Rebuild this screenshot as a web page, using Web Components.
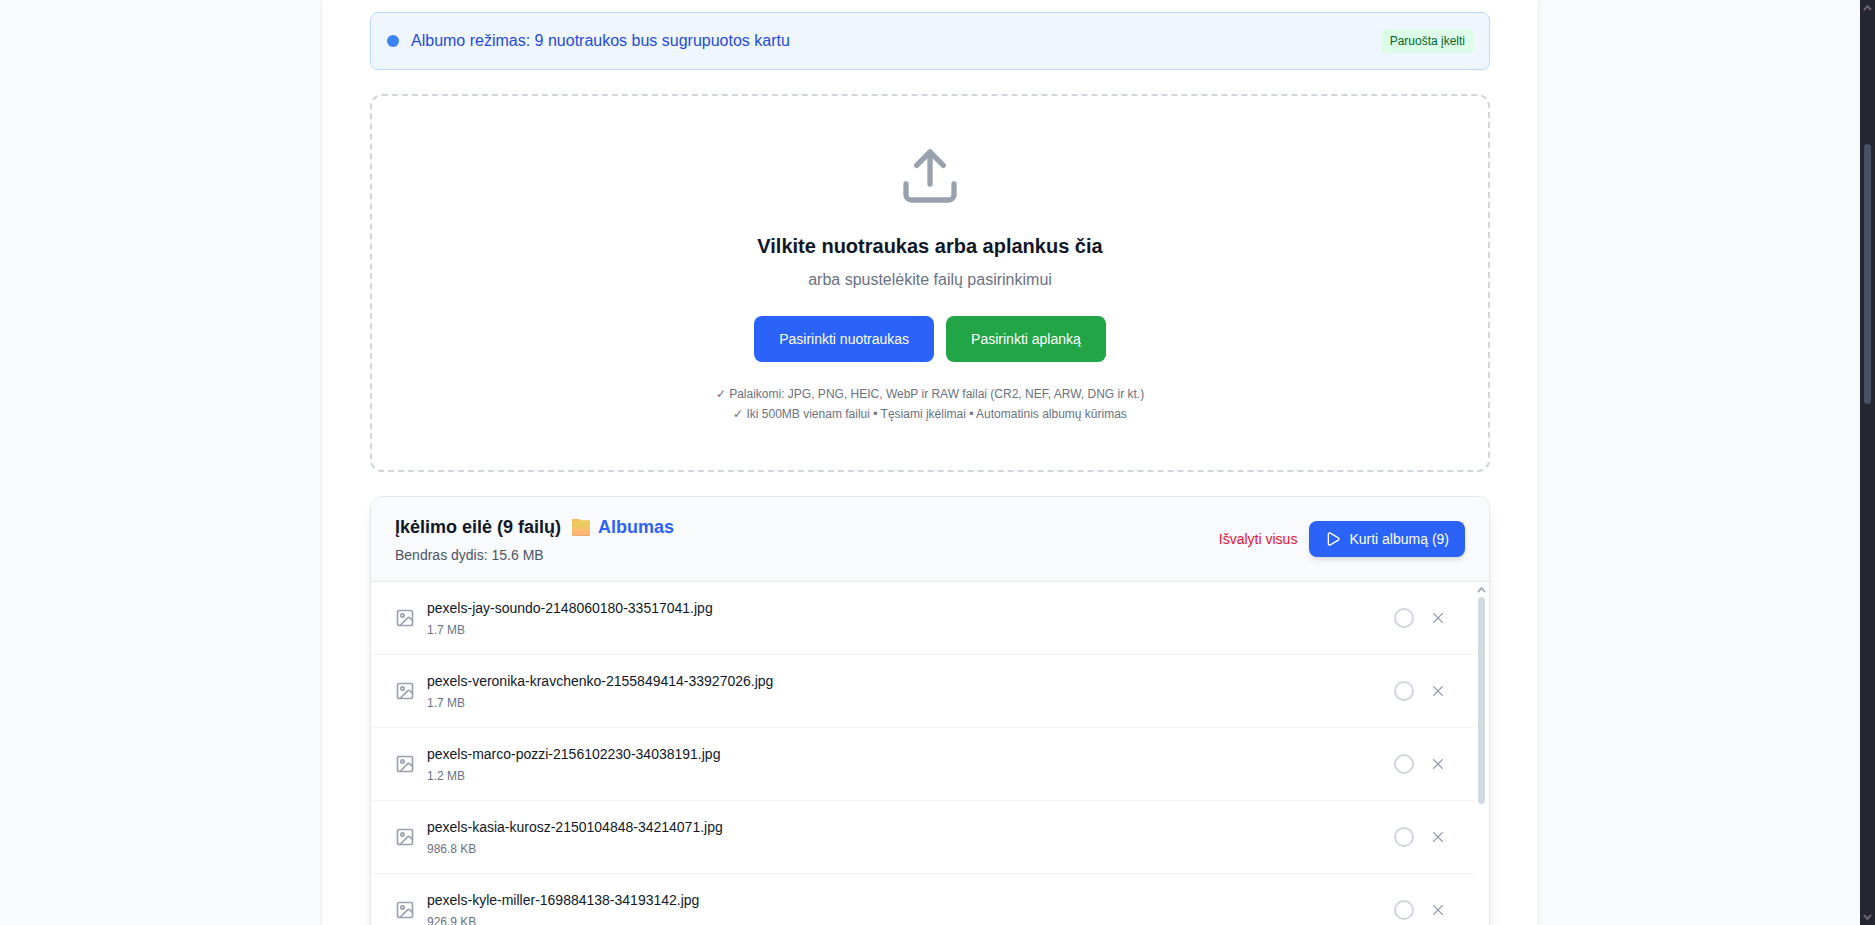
<!DOCTYPE html>
<html lang="lt">
<head>
  <meta charset="utf-8">
  <meta name="viewport" content="width=device-width, initial-scale=1">
  <title>Nuotraukų įkėlimas</title>
  <style>
    body {
      margin: 0;
      font-family: "Liberation Sans", Arial, sans-serif;
      font-size: 16px;
      line-height: 24px;
      color: #101828;
      background: #f9fafb;
    }
  </style>
</head>
<body>
  <upload-page>
    <album-banner status="Paruošta įkelti">Albumo režimas: 9 nuotraukos bus sugrupuotos kartu</album-banner>
    <drop-zone>
      <span slot="title">Vilkite nuotraukas arba aplankus čia</span>
      <span slot="hint">arba spustelėkite failų pasirinkimui</span>
      <app-button slot="action">Pasirinkti nuotraukas</app-button>
      <app-button slot="action" variant="green">Pasirinkti aplanką</app-button>
      <span slot="note">✓ Palaikomi: JPG, PNG, HEIC, WebP ir RAW failai (CR2, NEF, ARW, DNG ir kt.)</span>
      <span slot="note">✓ Iki 500MB vienam failui • Tęsiami įkėlimai • Automatinis albumų kūrimas</span>
    </drop-zone>
    <upload-queue total="15.6 MB">
      <queue-item name="pexels-jay-soundo-2148060180-33517041.jpg" size="1.7 MB"></queue-item>
      <queue-item name="pexels-veronika-kravchenko-2155849414-33927026.jpg" size="1.7 MB"></queue-item>
      <queue-item name="pexels-marco-pozzi-2156102230-34038191.jpg" size="1.2 MB"></queue-item>
      <queue-item name="pexels-kasia-kurosz-2150104848-34214071.jpg" size="986.8 KB"></queue-item>
      <queue-item name="pexels-kyle-miller-169884138-34193142.jpg" size="926.9 KB"></queue-item>
    </upload-queue>
  </upload-page>

  <script>
    const ICONS = {
      upload: '<path d="M12 3v12"/><path d="m17 8-5-5-5 5"/><path d="M21 15v4a2 2 0 0 1-2 2H5a2 2 0 0 1-2-2v-4"/>',
      play: '<path d="M5 5a2 2 0 0 1 3.008-1.728l11.997 6.998a2 2 0 0 1 .003 3.458l-12 7A2 2 0 0 1 5 19z"/>',
      image: '<rect width="18" height="18" x="3" y="3" rx="2" ry="2"/><circle cx="9" cy="9" r="2"/><path d="m21 15-3.086-3.086a2 2 0 0 0-2.828 0L6 21"/>',
      close: '<g stroke-width="1.8"><path d="M18.500 5.500 5.500 18.500"/><path d="m5.500 5.500 13 13"/></g>',
    };

    class LineIcon extends HTMLElement {
      constructor() {
        super();
        this.attachShadow({ mode: 'open' }).innerHTML = `
          <style>
            :host { display: block; flex: none; width: 20px; height: 20px; }
            svg { display: block; width: 100%; height: 100%; }
          </style>
          <svg viewBox="0 0 24 24" fill="none" stroke="currentColor" stroke-width="2"
            stroke-linecap="round" stroke-linejoin="round" aria-hidden="true">
            ${ICONS[this.getAttribute('name')]}
          </svg>
        `;
      }
    }

    class ScrollRail extends HTMLElement {
      constructor() {
        super();
        const arrow = '<path d="m4 10 3.5-4 3.5 4"/>';
        this.attachShadow({ mode: 'open' }).innerHTML = `
          <style>
            :host {
              display: flex;
              flex-direction: column;
              align-items: center;
              flex: none;
              width: 15px;
              background: var(--rail-track, transparent);
              color: var(--rail-arrow, #a9b5bd);
            }
            svg { display: block; flex: none; width: 15px; height: 15px; }
            .down { transform: rotate(180deg); }
            .track {
              flex: 1;
              display: flex;
              flex-direction: column;
              width: 7px;
            }
            .before { flex: var(--rail-before, 0) 0 0px; }
            .thumb {
              flex: var(--rail-size, 1) 0 0px;
              border-radius: 4px;
              background: var(--rail-thumb, #d1d9e1);
            }
            .after { flex: var(--rail-after, 0) 0 0px; }
          </style>
          <svg viewBox="0 0 15 15" fill="none" stroke="currentColor" stroke-width="2" aria-hidden="true">${arrow}</svg>
          <div class="track">
            <div class="before"></div>
            <div class="thumb"></div>
            <div class="after"></div>
          </div>
          <svg class="down" viewBox="0 0 15 15" fill="none" stroke="currentColor" stroke-width="2" aria-hidden="true">${arrow}</svg>
        `;
      }
    }

    class AppButton extends HTMLElement {
      constructor() {
        super();
        this.attachShadow({ mode: 'open' }).innerHTML = `
          <style>
            :host { display: block; }
            button {
              display: flex;
              align-items: center;
              gap: 8px;
              padding: 12px 24px;
              border: 1px solid transparent;
              border-radius: 8px;
              background: #2b63f8;
              color: white;
              font: inherit;
              font-size: 14px;
              line-height: 20px;
              cursor: pointer;
            }
            button:hover { filter: brightness(0.92); }
            :host([variant="green"]) button { background: #22a547; }
            :host([variant="text"]) button {
              padding: 0;
              border: none;
              background: none;
              color: #ea1038;
            }
            :host([size="small"]) button {
              padding: 8px 16px;
              border: none;
              box-shadow: 0 4px 6px -1px rgba(0, 0, 0, 0.1), 0 2px 4px -2px rgba(0, 0, 0, 0.1);
            }
          </style>
          <button type="button"><slot></slot></button>
        `;
      }
    }

    class AlbumBanner extends HTMLElement {
      constructor() {
        super();
        this.attachShadow({ mode: 'open' }).innerHTML = `
          <style>
            :host {
              display: flex;
              align-items: center;
              gap: 12px;
              padding: 16px;
              border: 1px solid #bedbff;
              border-radius: 8px;
              background: #eff6ff;
              color: #1f4be0;
            }
            .dot {
              width: 12px;
              height: 12px;
              border-radius: 50%;
              background: #3b82fb;
            }
            .text { flex: 1; }
            .badge {
              padding: 4px 8px;
              border-radius: 4px;
              background: #dcfce7;
              color: #016630;
              font-size: 12px;
              line-height: 16px;
            }
          </style>
          <span class="dot"></span>
          <span class="text"><slot></slot></span>
          <span class="badge">${this.getAttribute('status')}</span>
        `;
      }
    }

    class DropZone extends HTMLElement {
      constructor() {
        super();
        this.attachShadow({ mode: 'open' }).innerHTML = `
          <style>
            :host {
              display: flex;
              flex-direction: column;
              align-items: center;
              padding: 48px;
              border: 2px dashed #d1d5dc;
              border-radius: 12px;
              text-align: center;
            }
            line-icon { width: 64px; height: 64px; color: #99a1af; }
            h3 {
              margin: 24px 0 8px;
              font-size: 20px;
              line-height: 28px;
              font-weight: 600;
            }
            p { margin: 0 0 24px; color: #6a7282; }
            .actions { display: flex; gap: 12px; margin-bottom: 24px; }
            .notes {
              display: flex;
              flex-direction: column;
              gap: 4px;
              color: #6a7282;
              font-size: 12px;
              line-height: 16px;
            }
          </style>
          <line-icon name="upload"></line-icon>
          <h3><slot name="title"></slot></h3>
          <p><slot name="hint"></slot></p>
          <div class="actions"><slot name="action"></slot></div>
          <div class="notes"><slot name="note"></slot></div>
        `;
      }
    }

    class QueueItem extends HTMLElement {
      constructor() {
        super();
        this.attachShadow({ mode: 'open' }).innerHTML = `
          <style>
            :host {
              display: flex;
              align-items: center;
              gap: 12px;
              padding: 16px 24px;
              border-bottom: 1px solid #f3f4f6;
            }
            line-icon { color: #99a1af; }
            .info {
              flex: 1;
              display: flex;
              flex-direction: column;
              gap: 4px;
              min-width: 0;
            }
            .name { font-size: 14px; line-height: 20px; }
            .size { color: #6a7282; font-size: 12px; line-height: 16px; }
            .state {
              box-sizing: border-box;
              width: 20px;
              height: 20px;
              border: 2px solid #d1d5dc;
              border-radius: 50%;
            }
            button {
              padding: 4px;
              border: none;
              background: none;
              color: #8b94a4;
              cursor: pointer;
            }
            button:hover { color: #ea1038; }
            button line-icon { width: 16px; height: 16px; color: inherit; }
          </style>
          <line-icon name="image"></line-icon>
          <div class="info">
            <span class="name">${this.getAttribute('name')}</span>
            <span class="size">${this.getAttribute('size')}</span>
          </div>
          <span class="state"></span>
          <button type="button" aria-label="Pašalinti"><line-icon name="close"></line-icon></button>
        `;
        this.shadowRoot.querySelector('button').addEventListener('click', () => this.remove());
      }
    }

    class UploadQueue extends HTMLElement {
      constructor() {
        super();
        this.attachShadow({ mode: 'open' }).innerHTML = `
          <style>
            :host {
              display: block;
              border: 1px solid #e5e7eb;
              border-radius: 12px;
              background: white;
              overflow: hidden;
              box-shadow: 0 10px 15px -3px rgba(0, 0, 0, 0.1), 0 4px 6px -4px rgba(0, 0, 0, 0.1);
            }
            header {
              display: flex;
              align-items: center;
              gap: 12px;
              padding: 16px 24px;
              border-bottom: 1px solid #e5e7eb;
              background: #f9fafb;
            }
            .summary { flex: 1; }
            h3 {
              display: flex;
              align-items: center;
              margin: 0 0 4px;
              font-size: 18px;
              line-height: 28px;
              font-weight: 600;
            }
            .album {
              display: flex;
              align-items: center;
              gap: 7px;
              margin-left: 10px;
              color: #2b63f8;
            }
            .folder { display: block; width: 20px; height: 18px; }
            p { margin: 0; color: #4a5565; font-size: 14px; line-height: 20px; }
            app-button line-icon { width: 16px; height: 16px; }
            .list { display: flex; height: 384px; }
            .rows { flex: 1; overflow: hidden; }
            scroll-rail { --rail-size: 207; --rail-after: 147; }
          </style>
          <header>
            <div class="summary">
              <h3>
                Įkėlimo eilė (9 failų)
                <span class="album">
                  <svg class="folder" viewBox="0 0 20 18" aria-hidden="true">
                    <defs>
                      <linearGradient id="fill" x1="0" y1="0" x2="0" y2="1">
                        <stop offset="0" stop-color="#e9d055"/>
                        <stop offset="0.35" stop-color="#edc962"/>
                        <stop offset="0.8" stop-color="#ffb675"/>
                      </linearGradient>
                    </defs>
                    <path d="M1 1.5 1.5 1H8l1.500 1.500H19V5H1z" fill="#f3bd5f"/>
                    <path d="M1 4h7l1.500-1.500H19V17H1z" fill="url(#fill)"/>
                    <path d="M1 17h18v1H1z" fill="#e9a878"/>
                  </svg>
                  Albumas
                </span>
              </h3>
              <p>Bendras dydis: ${this.getAttribute('total')}</p>
            </div>
            <app-button variant="text">Išvalyti visus</app-button>
            <app-button size="small"><line-icon name="play"></line-icon>Kurti albumą (9)</app-button>
          </header>
          <div class="list">
            <div class="rows"><slot></slot></div>
            <scroll-rail></scroll-rail>
          </div>
        `;
      }
    }

    class UploadPage extends HTMLElement {
      constructor() {
        super();
        this.attachShadow({ mode: 'open' }).innerHTML = `
          <style>
            :host { display: flex; height: 100vh; overflow: hidden; }
            .view { flex: 1; padding: 0 32px; overflow: hidden; }
            main {
              display: flex;
              flex-direction: column;
              gap: 24px;
              box-sizing: border-box;
              max-width: 1216px;
              margin: 0 auto;
              padding: 12px 48px 48px;
              background: white;
              box-shadow: 0 1px 3px rgba(0, 0, 0, 0.1), 0 1px 2px -1px rgba(0, 0, 0, 0.1);
            }
            scroll-rail {
              --rail-track: #242732;
              --rail-thumb: #475065;
              --rail-arrow: #6d6474;
              --rail-before: 129;
              --rail-size: 260;
              --rail-after: 506;
            }
          </style>
          <div class="view"><main><slot></slot></main></div>
          <scroll-rail></scroll-rail>
        `;
      }
    }

    customElements.define('line-icon', LineIcon);
    customElements.define('scroll-rail', ScrollRail);
    customElements.define('app-button', AppButton);
    customElements.define('album-banner', AlbumBanner);
    customElements.define('drop-zone', DropZone);
    customElements.define('queue-item', QueueItem);
    customElements.define('upload-queue', UploadQueue);
    customElements.define('upload-page', UploadPage);
  </script>
</body>
</html>
